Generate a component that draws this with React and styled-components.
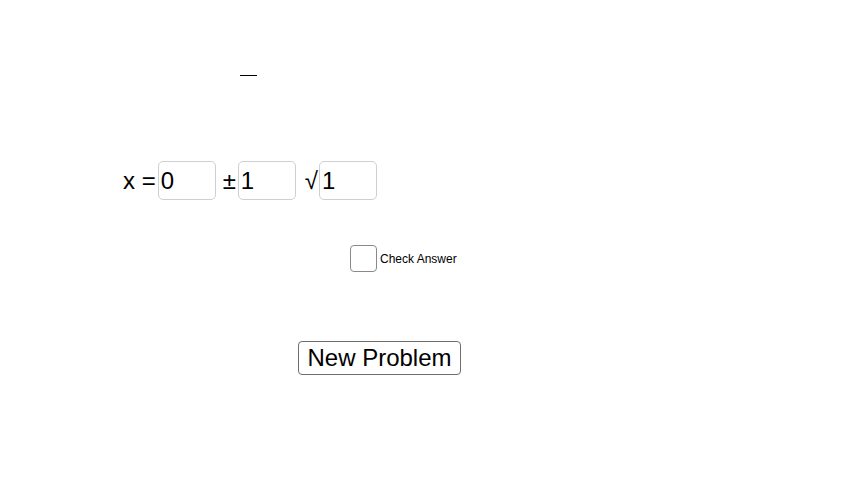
import React, { useState } from 'react';
import styled, { createGlobalStyle } from 'styled-components';

const GlobalStyle = createGlobalStyle`
  html, body {
    margin: 0;
    padding: 0;
    background: #ffffff;
  }
  body {
    font-family: "Liberation Sans", Arial, sans-serif;
  }
`;

const Applet = styled.div`
  width: 863px;
  height: 503px;
  background: #ffffff;
  display: flex;
  flex-direction: column;
  align-items: flex-start;
  padding-top: 75px;
  box-sizing: border-box;
  color: #000;
`;

const Dash = styled.div`
  margin-left: 240px;
  width: 17px;
  height: 1px;
  background: #000;
`;

const Equation = styled.div`
  display: flex;
  align-items: center;
  margin-top: 85px;
  margin-left: 123px;
  font-size: 24px;
  height: 39px;
`;

const Label = styled.span`
  margin-left: ${p => p.$gap || 0}px;
  margin-right: ${p => p.$after || 0}px;
  white-space: pre;
  line-height: 1;
`;

const Field = styled.input`
  width: 58px;
  height: 39px;
  box-sizing: border-box;
  border: 1px solid #cfcfcf;
  border-radius: 5px;
  padding: 0 0 0 2px;
  font-family: "Liberation Sans", Arial, sans-serif;
  font-size: 24px;
  color: #000;
  background: #fff;
  outline: none;
`;

const CheckRow = styled.label`
  display: flex;
  align-items: center;
  margin-top: 45px;
  margin-left: 350px;
  font-size: 12px;
  gap: 3px;
  cursor: pointer;
`;

const Box = styled.span`
  width: 27px;
  height: 27px;
  box-sizing: border-box;
  border: 1px solid #8a8a8a;
  border-radius: 4px;
  background: #fff;
  display: flex;
  align-items: center;
  justify-content: center;
  font-size: 16px;
`;

const Button = styled.button`
  margin-top: 69px;
  margin-left: 298px;
  width: 163px;
  height: 34px;
  box-sizing: border-box;
  border: 1px solid #6e6e6e;
  border-radius: 4px;
  background: #fff;
  font-family: "Liberation Sans", Arial, sans-serif;
  font-size: 24px;
  color: #000;
  padding: 0;
  cursor: pointer;
`;

export default function App() {
  const [a, setA] = useState('0');
  const [b, setB] = useState('1');
  const [c, setC] = useState('1');
  const [checked, setChecked] = useState(false);

  return (
    <>
      <GlobalStyle />
      <Applet>
        <Dash />
        <Equation>
          <Label $after={2}>x =</Label>
          <Field value={a} onChange={e => setA(e.target.value)} />
          <Label $gap={7} $after={2}>±</Label>
          <Field value={b} onChange={e => setB(e.target.value)} />
          <Label $gap={9} $after={1}>√</Label>
          <Field value={c} onChange={e => setC(e.target.value)} />
        </Equation>
        <CheckRow onClick={() => setChecked(!checked)}>
          <Box>{checked ? '✓' : ''}</Box>
          Check Answer
        </CheckRow>
        <Button>New Problem</Button>
      </Applet>
    </>
  );
}
